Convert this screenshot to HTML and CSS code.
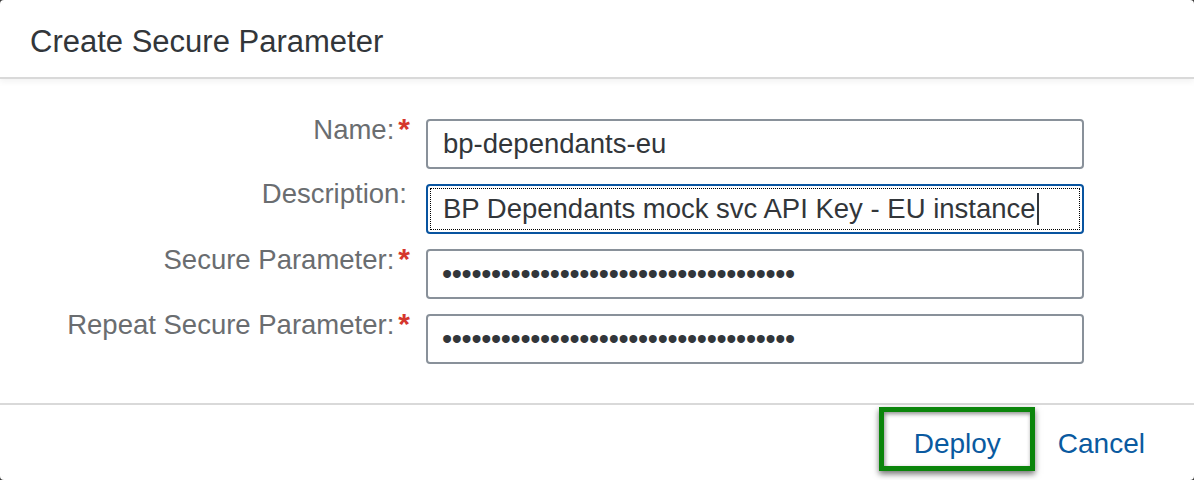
FILE: index.html
```html
<!DOCTYPE html>
<html lang="en">
<head>
<meta charset="utf-8">
<title>Create Secure Parameter</title>
<link rel="stylesheet" href="styles.css">
</head>
<body>
<div class="dialog">
  <header class="dialog-header">
    <h1 class="dialog-title">Create Secure Parameter</h1>
  </header>
  <main class="dialog-body">
    <form class="form-grid">
      <label class="form-label">Name:<span class="req">*</span></label>
      <div class="field" role="textbox">bp-dependants-eu</div>

      <label class="form-label no-req">Description:</label>
      <div class="field focused" role="textbox">BP Dependants mock svc API Key - EU instance<span class="caret"></span></div>

      <label class="form-label">Secure Parameter:<span class="req">*</span></label>
      <div class="field mask" role="textbox">••••••••••••••••••••••••••••••••••••</div>

      <label class="form-label">Repeat Secure Parameter:<span class="req">*</span></label>
      <div class="field mask" role="textbox">••••••••••••••••••••••••••••••••••••</div>
    </form>
  </main>
  <footer class="dialog-footer">
    <button class="btn btn-highlight" type="button">Deploy</button>
    <button class="btn btn-plain" type="button">Cancel</button>
  </footer>
</div>
</body>
</html>
```

FILE: styles.css
```css
html, body {
  margin: 0;
  padding: 0;
  background: #3a3a3a;
}

body {
  width: 1194px;
  height: 480px;
  overflow: hidden;
  font-family: "Liberation Sans", Arial, sans-serif;
}

.dialog {
  width: 1194px;
  height: 480px;
  background: #ffffff;
  border-radius: 4px;
  display: flex;
  flex-direction: column;
  overflow: hidden;
}

.dialog-header {
  box-sizing: border-box;
  height: 79px;
  padding: 24px 0 0 30px;
  border-bottom: 2px solid #d9d9d9;
  box-shadow: 0 3px 6px rgba(0, 0, 0, 0.05);
  position: relative;
  z-index: 1;
}

.dialog-title {
  margin: 0;
  font-size: 31px;
  font-weight: normal;
  line-height: 36px;
  color: #32363a;
}

.dialog-body {
  flex: 1;
  padding-top: 34px;
}

.form-grid {
  display: grid;
  grid-template-columns: 410px 658px;
  column-gap: 16px;
  row-gap: 9px;
  margin: 0;
}

.form-label {
  text-align: right;
  font-size: 27.5px;
  line-height: 31px;
  color: #6a6d70;
  white-space: nowrap;
}

.form-label.no-req {
  padding-right: 3px;
}

.req {
  color: #d5372d;
  font-weight: bold;
  font-size: 30px;
  margin-left: 4px;
}

.field {
  box-sizing: border-box;
  margin-top: 6px;
  height: 50px;
  border: 2px solid #89919a;
  border-radius: 4px;
  padding: 0 15px;
  display: flex;
  align-items: center;
  font-size: 27.5px;
  color: #32363a;
  white-space: nowrap;
  overflow: hidden;
}

.field.focused {
  border-color: #0854a0;
  outline: 1px dotted #000000;
  outline-offset: -5px;
}

.caret {
  display: inline-block;
  width: 2px;
  height: 32px;
  margin-left: 1px;
  background: #32363a;
}

.field.mask {
  font-size: 29px;
  letter-spacing: -0.35px;
  padding-left: 14px;
}

.dialog-footer {
  box-sizing: border-box;
  height: 77px;
  border-top: 2px solid #d9d9d9;
  display: flex;
  justify-content: flex-end;
  align-items: flex-start;
  padding: 2px 26px 0 0;
}

.btn {
  box-sizing: border-box;
  height: 64px;
  margin: 0;
  border: 5px solid transparent;
  background: transparent;
  font-family: "Liberation Sans", Arial, sans-serif;
  font-size: 28px;
  line-height: 31px;
  color: #0a5aa0;
  cursor: pointer;
}

.btn-plain {
  padding: 8px 18px 0 18px;
}

.btn-highlight {
  border-color: #0b850b;
  padding: 8px 29px 0 30px;
  box-shadow: 0 3px 6px rgba(0, 0, 0, 0.55), inset 1px 2px 4px rgba(0, 0, 0, 0.45);
}
```
